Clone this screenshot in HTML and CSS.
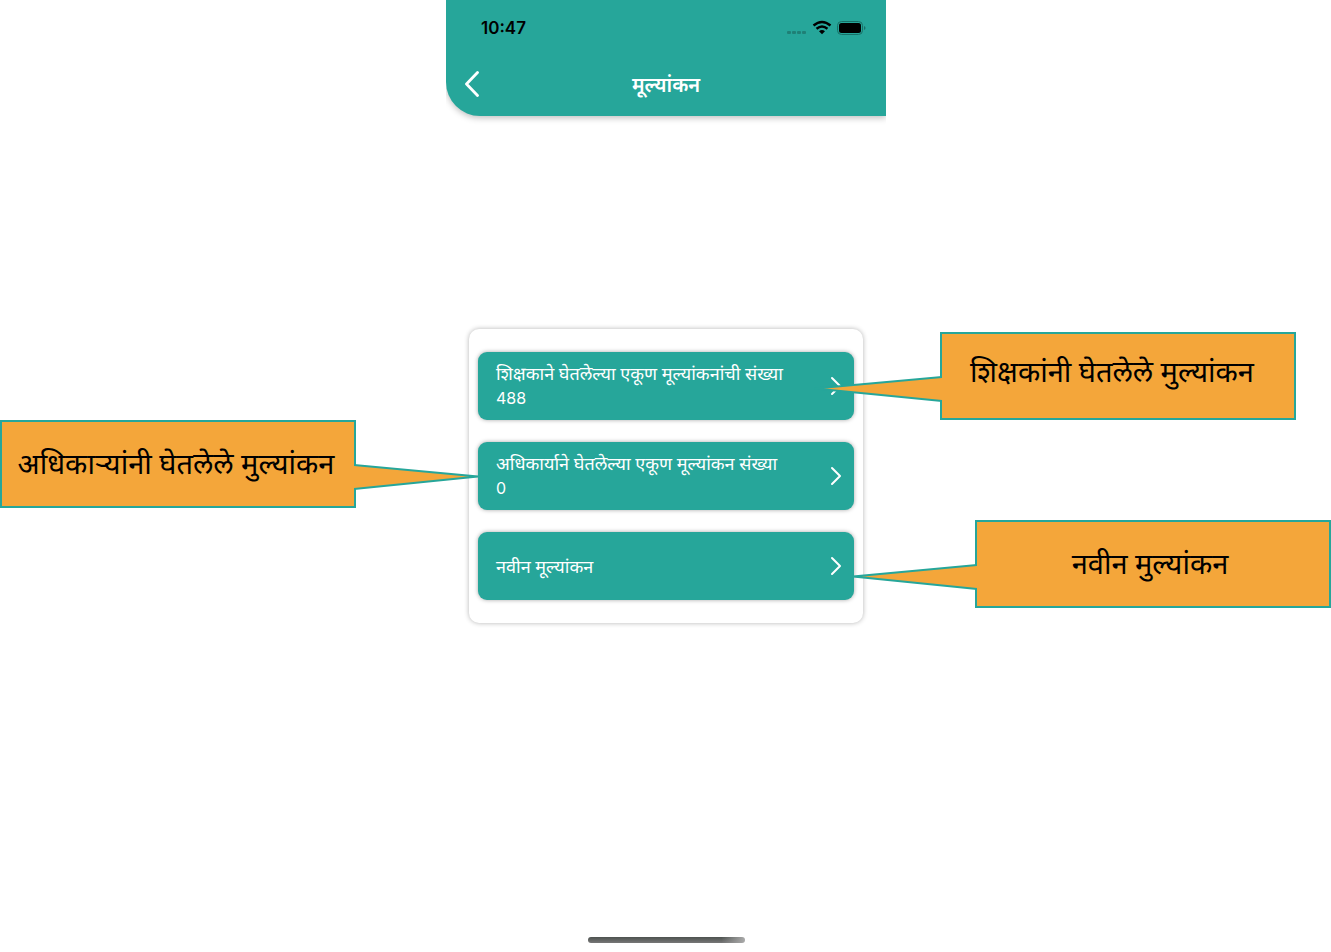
FILE: index.html
```html
<!DOCTYPE html>
<html lang="mr">
<head>
<meta charset="utf-8">
<meta name="viewport" content="width=device-width, initial-scale=1">
<title>मूल्यांकन</title>
<link rel="stylesheet" href="styles.css">
</head>
<body>
<div class="phone">
  <header class="header">
    <div class="status">
      <time class="clock">10:47</time>
      <svg class="status-icons" width="80" height="16" viewBox="0 0 80 16" aria-hidden="true">
        <g fill="#1f8076"><rect x="1" y="11" width="4" height="3" rx="1"/><rect x="6" y="11" width="4" height="3" rx="1"/><rect x="11" y="11" width="4" height="3" rx="1"/><rect x="16" y="11" width="4" height="3" rx="1"/></g>
        <g fill="none" stroke="#000" stroke-width="2.4"><path d="M27.500 5.500Q36 -1.600 44.500 5.500"/><path d="M30.500 8.800Q36 4.400 41.500 8.800"/></g>
        <path d="M33 11.200Q36 8.800 39 11.200L36 14.200Z"/>
        <rect x="51.500" y="1.500" width="25" height="13" rx="4" fill="none" stroke="#187067"/>
        <rect x="53" y="3" width="22" height="10" rx="2.500"/>
        <path d="M78 6Q79.500 6.500 79.500 8T78 10Z" fill="#187067"/>
      </svg>
    </div>
    <div class="titlebar">
      <button class="back" type="button" aria-label="मागे">
        <svg width="16" height="26" viewBox="0 0 16 26"><path d="M13.500 1.500L2.500 13L13.500 24.500" fill="none" stroke="#fff" stroke-width="2.800" stroke-linecap="round" stroke-linejoin="round"/></svg>
      </button>
      <h1 class="title">मूल्यांकन</h1>
    </div>
  </header>
  <main class="main">
    <ul class="card">
      <li class="row">
        <button class="item" type="button">
          <span class="label">शिक्षकाने घेतलेल्या एकूण मूल्यांकनांची संख्या<span class="count">488</span></span>
          <svg class="chevron" width="12" height="20" viewBox="0 0 12 20"><path d="M2 2L10 10L2 18"/></svg>
        </button>
        <div class="callout callout-teachers">
          <svg class="tail" width="130" height="30" viewBox="0 0 130 30"><path d="M130 3L3 14.500L130 27"/></svg>
          शिक्षकांनी घेतलेले मुल्यांकन
        </div>
      </li>
      <li class="row">
        <button class="item" type="button">
          <span class="label">अधिकार्याने घेतलेल्या एकूण मूल्यांकन संख्या<span class="count">0</span></span>
          <svg class="chevron" width="12" height="20" viewBox="0 0 12 20"><path d="M2 2L10 10L2 18"/></svg>
        </button>
        <div class="callout callout-officers">
          <svg class="tail" width="127" height="30" viewBox="0 0 127 30"><path d="M0 3L124 14.500L0 27"/></svg>
          अधिकाऱ्यांनी घेतलेले मुल्यांकन
        </div>
      </li>
      <li class="row">
        <button class="item" type="button">
          <span class="label">नवीन मूल्यांकन</span>
          <svg class="chevron" width="12" height="20" viewBox="0 0 12 20"><path d="M2 2L10 10L2 18"/></svg>
        </button>
        <div class="callout callout-new">
          <svg class="tail" width="127" height="30" viewBox="0 0 127 30"><path d="M127 3L3 14.500L127 27"/></svg>
          नवीन मुल्यांकन
        </div>
      </li>
    </ul>
  </main>
  <footer class="footer"><div class="home"></div></footer>
</div>
</body>
</html>
```
FILE: styles.css
```css
* { box-sizing: border-box; }
body {
  margin: 0;
  padding-left: 1px;
  background: #fff;
  font-family: "Noto Sans", "Noto Sans Devanagari", sans-serif;
  overflow-x: hidden;
}
button { font: inherit; color: inherit; border: 0; background: none; cursor: pointer; }
.phone {
  max-width: 440px;
  min-height: 100vh;
  margin: 0 auto;
  display: grid;
  grid-template-rows: auto 1fr 116px;
}
.header {
  background: #26a69a;
  border-bottom-left-radius: 34px;
  box-shadow: 0 2px 6px rgba(0, 0, 0, 0.25);
  clip-path: inset(0 0 -12px 0);
}
.status {
  height: 56px;
  padding: 0 20px 0 35px;
  display: flex;
  align-items: center;
  justify-content: space-between;
}
.clock { font: 600 17px/24px Inter, sans-serif; color: #000; }
.titlebar {
  height: 60px;
  padding: 0 18px 4px;
  display: grid;
  grid-template-columns: 16px 1fr 16px;
  align-items: center;
}
.back { padding: 0; display: flex; }
.title { margin: 0; padding-top: 2px; color: #fff; font-size: 20px; line-height: 28px; font-weight: 600; text-align: center; }
.main { display: grid; align-items: center; padding: 0 23px; }
.card {
  list-style: none;
  margin: 0;
  padding: 23px 9px;
  display: grid;
  gap: 22px;
  border-radius: 10px;
  background: #fff;
  box-shadow: 0 0 5px rgba(0, 0, 0, 0.3);
}
.row { position: relative; }
.item {
  width: 100%;
  height: 68px;
  padding: 0 12px 0 18px;
  display: flex;
  align-items: center;
  justify-content: space-between;
  border-radius: 9px;
  background: #26a69a;
  box-shadow: 0 0 4px rgba(0, 0, 0, 0.35);
  color: #fff;
  text-align: left;
  font-size: 18px;
  line-height: 25px;
  font-weight: 400;
}
.label { white-space: nowrap; }
.count { display: block; font-family: Inter, sans-serif; font-size: 16px; }
.chevron path { fill: none; stroke: #fff; stroke-width: 2; stroke-linecap: round; stroke-linejoin: round; }
.callout {
  position: absolute;
  z-index: 1;
  width: 356px;
  height: 88px;
  display: flex;
  align-items: center;
  justify-content: center;
  border: 2px solid #26a69a;
  background: #f4a63a;
  color: #000;
  font-size: 29px;
  line-height: 44px;
  font-weight: 400;
  white-space: nowrap;
}
.callout-teachers { left: 462px; top: -20px; padding: 0 12px 10px 0; }
.callout-officers { right: 498px; top: -22px; padding: 0 4px 2px 0; }
.callout-new { left: 497px; top: -12px; padding: 0 6px 2px 0; }
.tail { position: absolute; top: 40px; right: 100%; }
.tail path { fill: #f4a63a; stroke: #26a69a; stroke-width: 2; }
.callout-officers .tail { right: auto; left: 100%; }
.footer { display: flex; align-items: flex-end; justify-content: center; padding-bottom: 9px; }
.home {
  width: 157px;
  height: 6px;
  border-radius: 3px;
  background: linear-gradient(to right, transparent 85%, #aaa), linear-gradient(#4d524f, #777);
}
```
